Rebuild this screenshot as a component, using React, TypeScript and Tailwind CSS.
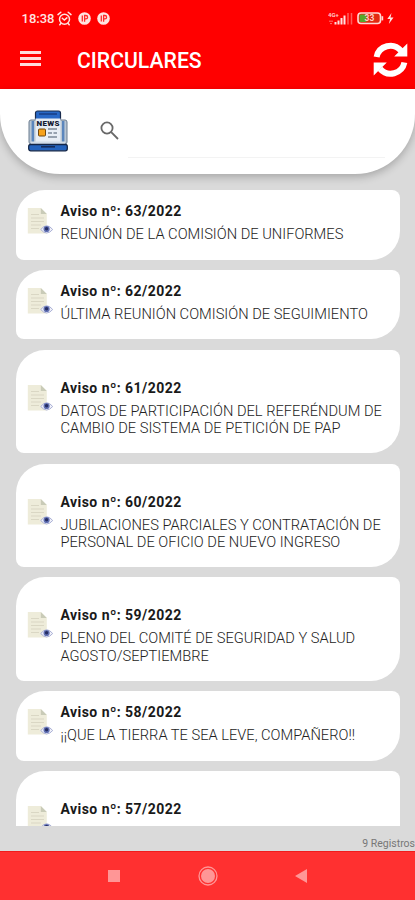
type Circular = {
  numero: string;
  lineas: string[];
};

const circulares: Circular[] = [
  { numero: '63/2022', lineas: ['REUNIÓN DE LA COMISIÓN DE UNIFORMES'] },
  { numero: '62/2022', lineas: ['ÚLTIMA REUNIÓN COMISIÓN DE SEGUIMIENTO'] },
  { numero: '61/2022', lineas: ['DATOS DE PARTICIPACIÓN DEL REFERÉNDUM DE', 'CAMBIO DE SISTEMA DE PETICIÓN DE PAP'] },
  { numero: '60/2022', lineas: ['JUBILACIONES PARCIALES Y CONTRATACIÓN DE', 'PERSONAL DE OFICIO DE NUEVO INGRESO'] },
  { numero: '59/2022', lineas: ['PLENO DEL COMITÉ DE SEGURIDAD Y SALUD', 'AGOSTO/SEPTIEMBRE'] },
  { numero: '58/2022', lineas: ['¡¡QUE LA TIERRA TE SEA LEVE, COMPAÑERO!!'] },
  { numero: '57/2022', lineas: ['', ''] },
];

function AlarmIcon() {
  return (
    <svg className="w-[15px] h-[15px]" viewBox="0 0 15 15" fill="none" stroke="#ffe4e1" strokeWidth="1.5" strokeLinecap="round">
      <circle cx="7.5" cy="8.3" r="5" />
      <path d="M1 3.6 3.8 1.2M14 3.6 11.2 1.2M5.3 7.3l2 1.8 2.6-2.2M3.8 12.5l-1 1.3M11.2 12.5l1 1.3" />
    </svg>
  );
}

function ParkingIcon() {
  return (
    <svg className="w-[13px] h-[13px]" viewBox="0 0 13 13">
      <circle cx="6.5" cy="6.5" r="6.3" fill="#ffe4e1" />
      <path d="M4.3 9.5V3.5M6.6 9.8V3.5h1.3a1.7 1.7 0 0 1 0 3.4H6.6" fill="none" stroke="#ff2a2a" strokeWidth="1.3" />
    </svg>
  );
}

function SignalIcon() {
  return (
    <svg className="w-[26px] h-[15px]" viewBox="0 0 26 15">
      <text x="0" y="5.5" fontFamily="Roboto, sans-serif" fontSize="6" fontWeight="700" fill="#ffc9c9">4G+</text>
      <path d="M1 10.2h4M2 12.6h2" stroke="#ff7070" strokeWidth="1" />
      <path d="M7.5 11v2.5M10.5 9.5v4M13.5 7v6.5M16.5 4.5v9" stroke="#ffe0e0" strokeWidth="2" />
      <path d="M20 2v11.5M23.5 2v11.5" stroke="#ff5c5c" strokeWidth="1.5" />
    </svg>
  );
}

function BatteryIcon() {
  return (
    <svg className="w-[38px] h-[13px]" viewBox="0 0 38 13">
      <rect x="1" y="1" width="22.5" height="10.5" rx="3" fill="#e22a12" stroke="#ffd9d5" strokeWidth="1.6" />
      <rect x="2.7" y="2.6" width="7" height="7.3" rx="1" fill="#55a82a" />
      <path d="M24.5 4.2h1.7v4.2h-1.7z" fill="#ffd9d5" />
      <text x="12.5" y="9.4" textAnchor="middle" fontFamily="Roboto, sans-serif" fontSize="8.5" fontWeight="700" fill="#ffd0c8">33</text>
      <path d="M34.5 1 30.3 7h2.8l-1.3 5 4.7-6.5h-3z" fill="#ffe4e1" />
    </svg>
  );
}

function RefreshIcon() {
  return (
    <svg className="w-[35px] h-[35px] -mt-[3px]" viewBox="0 0 35 35" fill="#fff">
      <path d="M3.6 15A14 14 0 0 1 28 8.8M31.4 20.5A14 14 0 0 1 7 26.7" fill="none" stroke="#fff" strokeWidth="6" />
      <path d="M34.3 1.6v13H21.2zM.7 33.6v-13h13.1z" />
    </svg>
  );
}

function NewsIcon() {
  return (
    <svg className="w-10 h-[42px] shrink-0" viewBox="0 0 40 42">
      <rect x="7.5" y="1" width="25" height="11" rx="2" fill="#2868c6" stroke="#172a4d" strokeWidth="1.2" />
      <path d="M11 4h18" stroke="#173d83" strokeWidth="1.5" />
      <rect x="1" y="10" width="38" height="24" rx="2" fill="#b9c6d3" stroke="#6b7d90" />
      <path d="M4.8 11v22M35.2 11v22" stroke="#5b86bd" strokeWidth="2.4" />
      <path d="M7.5 8.5h25v24.5h-25z" fill="#e8eef5" />
      <text x="8.5" y="16.3" fontFamily="Roboto, sans-serif" fontSize="8" fontWeight="900" fill="#172033" textLength="23">NEWS</text>
      <rect x="10.5" y="19" width="7" height="7" rx="1" fill="#f6a21c" stroke="#70480f" />
      <path d="M20 19h9M20 23h4M25.5 23H29M20 27h9" stroke="#46566b" strokeWidth="1.2" />
      <path d="M3 31.5h34v3H3z" fill="#d2dce7" />
      <rect x=".7" y="34.5" width="38.6" height="6.3" rx="2" fill="#2463bd" stroke="#142647" strokeWidth="1.3" />
      <path d="M13 36.8h14" stroke="#142b59" strokeWidth="1.6" />
    </svg>
  );
}

function DocumentIcon() {
  return (
    <svg className="w-[26px] h-7 shrink-0" viewBox="0 0 26 28">
      <path d="M.8 1h13l6 6v19.5H.8z" fill="#eeecda" />
      <path d="M13.8 1v6h6z" fill="#c9cbb7" />
      <path d="M4 7.5h8M4 11h13M4 14.5h13M4 18h10M4 21.5h8" stroke="#d7d5c2" strokeWidth=".9" />
      <path d="M13.7 22.5q6-7.5 12 0-6 7-12 0z" fill="#f0f1fa" stroke="#a3a9d0" strokeWidth=".9" />
      <circle cx="19.6" cy="22" r="3.1" fill="#6170b3" />
      <circle cx="19.6" cy="21.8" r="1.7" fill="#252d62" />
    </svg>
  );
}

function CircularCard({ numero, lineas }: Circular) {
  const size = lineas.length > 1 ? 'h-[103.4px] pt-[30px]' : 'h-[69.5px] pt-[13px]';

  return (
    <article className={`flex shrink-0 bg-white pl-[11px] rounded-tl-[29px] rounded-tr-lg rounded-br-[29px] rounded-bl-lg ${size}`}>
      <div className="pt-1">
        <DocumentIcon />
      </div>
      <div className="pl-[7.5px] whitespace-nowrap">
        <h2 className="text-[14px] leading-[17px] font-bold tracking-[0.45px] text-[#191919]">Aviso nº: {numero}</h2>
        <div className="pt-1.5 text-[14.67px] leading-[17.3px] font-light text-[#222]">
          {lineas.map((linea, i) => (
            <p key={i}>{linea}</p>
          ))}
        </div>
      </div>
    </article>
  );
}

export default function App() {
  return (
    <div className="w-full h-[900px] flex flex-col overflow-hidden bg-[#dadada] font-['Roboto',sans-serif]">
      <header className="h-[88.5px] shrink-0 bg-[#ff0000] text-white">
        <div className="h-[37px] flex items-center justify-between pl-[21.5px] pr-5">
          <div className="flex items-center">
            <span className="w-[35.5px] text-[13px] font-medium text-[#ffe4e1]">18:38</span>
            <AlarmIcon />
            <div className="flex gap-1.5 pl-1.5">
              <ParkingIcon />
              <ParkingIcon />
            </div>
          </div>
          <div className="flex items-center gap-[3px]">
            <SignalIcon />
            <BatteryIcon />
          </div>
        </div>
        <div className="h-[47px] flex items-center pl-5 pr-[7px]">
          <div className="w-[21px] flex flex-col gap-[3.5px] -mt-1">
            <span className="h-[2.5px] bg-[#ffdada]" />
            <span className="h-[2.5px] bg-[#ffdada]" />
            <span className="h-[2.5px] bg-[#ffdada]" />
          </div>
          <h1 className="grow pl-9 pt-px text-[21.2px] font-medium">CIRCULARES</h1>
          <RefreshIcon />
        </div>
      </header>

      <section className="h-[85px] shrink-0 flex items-start bg-white rounded-b-[60px] shadow-[0_3px_9px_rgba(0,0,0,0.24)] pl-7 pt-[21.5px]">
        <NewsIcon />
        <svg className="w-5 h-5 ml-8 mt-[11px]" viewBox="0 0 20 20" fill="none" stroke="#686868" strokeWidth="1.8">
          <circle cx="7" cy="7" r="5.6" />
          <path d="m11.2 11.2 6.8 6.8" />
        </svg>
        <div className="w-[257px] h-[48px] ml-2 border-b border-[#f3f3f3]" />
      </section>

      <main className="h-[652.5px] shrink-0 flex flex-col gap-[10.4px] overflow-hidden pt-[16.5px] pl-4 pr-[15px]">
        {circulares.map((c) => (
          <CircularCard key={c.numero} {...c} />
        ))}
      </main>

      <div className="h-[25px] shrink-0 flex justify-end items-end pb-[1px] text-[10.5px] leading-[13px] text-[#777]">9 Registros</div>

      <footer className="h-[49px] shrink-0 flex items-center justify-center bg-[#ff3030] border-t border-[#ef1c1c]">
        <svg className="w-[202px] h-[22px] mr-[2px]" viewBox="0 0 202 22" fill="#ff9696">
          <path d="M2 5h12v12H2zM201 4v14l-12-7z" />
          <circle cx="102" cy="11" r="7" />
          <circle cx="102" cy="11" r="9" fill="none" stroke="#ff9696" strokeWidth="1.3" />
        </svg>
      </footer>
    </div>
  );
}
